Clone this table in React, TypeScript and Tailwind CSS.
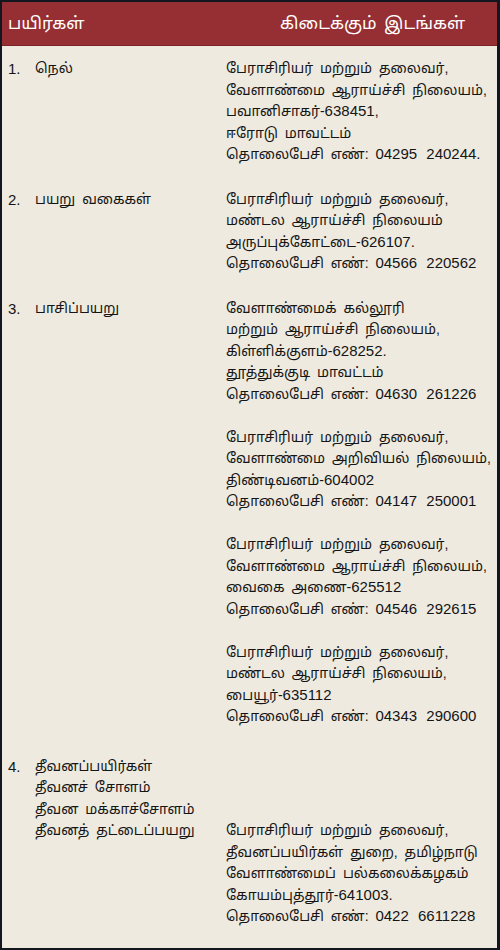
import React from 'react';

type Row = {
  no: string;
  crops: string[];
  // how many left lines come before the address starts
  offset?: number;
  extra?: string;
  places: string[][];
};

const rows: Row[] = [
  {
    no: '1.',
    crops: ['நெல்'],
    places: [[
      'பேராசிரியர் மற்றும் தலைவர்,',
      'வேளாண்மை ஆராய்ச்சி நிலையம்,',
      'பவானிசாகர்-638451,',
      'ஈரோடு மாவட்டம்',
      'தொலைபேசி எண்: 04295 240244.',
    ]],
  },
  {
    no: '2.',
    crops: ['பயறு வகைகள்'],
    places: [[
      'பேராசிரியர் மற்றும் தலைவர்,',
      'மண்டல ஆராய்ச்சி நிலையம்',
      'அருப்புக்கோட்டை-626107.',
      'தொலைபேசி எண்: 04566 220562',
    ]],
  },
  {
    no: '3.',
    crops: ['பாசிப்பயறு'],
    extra: 'pb-[16px]',
    places: [
      [
        'வேளாண்மைக் கல்லூரி',
        'மற்றும் ஆராய்ச்சி நிலையம்,',
        'கிள்ளிக்குளம்-628252.',
        'தூத்துக்குடி மாவட்டம்',
        'தொலைபேசி எண்: 04630 261226',
      ],
      [
        'பேராசிரியர் மற்றும் தலைவர்,',
        'வேளாண்மை அறிவியல் நிலையம்,',
        'திண்டிவனம்-604002',
        'தொலைபேசி எண்: 04147 250001',
      ],
      [
        'பேராசிரியர் மற்றும் தலைவர்,',
        'வேளாண்மை ஆராய்ச்சி நிலையம்,',
        'வைகை அணை-625512',
        'தொலைபேசி எண்: 04546 292615',
      ],
      [
        'பேராசிரியர் மற்றும் தலைவர்,',
        'மண்டல ஆராய்ச்சி நிலையம்,',
        'பையூர்-635112',
        'தொலைபேசி எண்: 04343 290600',
      ],
    ],
  },
  {
    no: '4.',
    crops: ['தீவனப்பயிர்கள்', 'தீவனச் சோளம்', 'தீவன மக்காச்சோளம்', 'தீவனத் தட்டைப்பயறு'],
    offset: 3,
    places: [[
      'பேராசிரியர் மற்றும் தலைவர்,',
      'தீவனப்பயிர்கள் துறை, தமிழ்நாடு',
      'வேளாண்மைப் பல்கலைக்கழகம்',
      'கோயம்புத்தூர்-641003.',
      'தொலைபேசி எண்: 0422 6611228',
    ]],
  },
];

// numbers are set in an Arial-like face
const Line = ({ text }: { text: string }) => {
  const parts = text.split(/(\d+(?:\s\d+)*\.?)/);
  return (
    <span className="whitespace-nowrap h-[21.5px]">
      {parts.map((p, i) =>
        i % 2 === 1 ? (
          <span key={i} className="font-['Liberation_Sans',sans-serif] text-[15px] leading-none [word-spacing:5px]">{p}</span>
        ) : (
          <React.Fragment key={i}>{p}</React.Fragment>
        )
      )}
    </span>
  );
};

export default function App() {
  return (
    <div className="w-[500px] h-[950px] bg-[#eeeae0] border-t-2 border-l-2 border-r-[3px] border-b-2 border-[#14161f] text-[#151515] font-['Liberation_Sans','Noto_Sans_Tamil','Lohit_Tamil',sans-serif] text-[14px] leading-[21.5px] [word-spacing:3px] flex flex-col">
      <div className="h-[44px] bg-[#962f33] border-b border-[#7d2327] text-white text-[17px] grid grid-cols-[224px_1fr] items-center shrink-0">
        <div className="pl-[6px]">பயிர்கள்</div>
        <div className="pl-[54px]">கிடைக்கும் இடங்கள்</div>
      </div>
      <div className="flex flex-col">
        {rows.map((row) => (
          <div key={row.no} className={`grid grid-cols-[224px_1fr] pt-[12px] ${row.extra ?? 'pb-[11px]'}`}>
            <div className="flex pl-[6px]">
              <span className="w-[27px] shrink-0 font-['Liberation_Sans',sans-serif] text-[15px]">{row.no}</span>
              <div className="flex flex-col">
                {row.crops.map((c) => (
                  <Line key={c} text={c} />
                ))}
              </div>
            </div>
            <div className="flex flex-col">
              {row.offset ? <div style={{ height: row.offset * 21.5 }} /> : null}
              <div className="flex flex-col gap-[21.5px]">
                {row.places.map((p, i) => (
                  <div key={i} className="flex flex-col">
                    {p.map((line) => (
                      <Line key={line} text={line} />
                    ))}
                  </div>
                ))}
              </div>
            </div>
          </div>
        ))}
      </div>
    </div>
  );
}
